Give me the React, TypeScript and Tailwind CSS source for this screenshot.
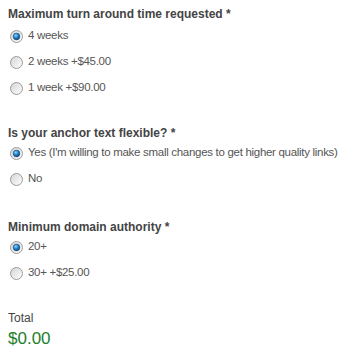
import React from "react";

function Radio({ checked }: { checked?: boolean }) {
  return (
    <svg width="13" height="13" viewBox="0 0 13 13" className="shrink-0">
      <defs>
        <linearGradient id="rbg" x1="0" y1="0" x2="1" y2="1">
          <stop offset="0" stopColor="#d4d4d4" />
          <stop offset="1" stopColor="#ffffff" />
        </linearGradient>
        <radialGradient id="rdot" cx="0.4" cy="0.35" r="0.7">
          <stop offset="0" stopColor="#9ad8ff" />
          <stop offset="0.5" stopColor="#1a7fc9" />
          <stop offset="1" stopColor="#0b3f73" />
        </radialGradient>
      </defs>
      <circle cx="6.5" cy="6.5" r="6" fill="url(#rbg)" stroke="#9a9b9b" strokeWidth="1" />
      {checked && <circle cx="6.5" cy="6.5" r="3.4" fill="url(#rdot)" stroke="#2a4f72" strokeWidth="0.5" />}
    </svg>
  );
}

function Option({ label, checked }: { label: string; checked?: boolean }) {
  return (
    <div className="flex items-center gap-[5px] pl-[10px] h-[26px]">
      <Radio checked={checked} />
      <span className="text-[11.5px] tracking-[-0.3px] text-[#555] whitespace-nowrap">{label}</span>
    </div>
  );
}

function Group({ title, children, first }: { title: string; children: React.ReactNode; first?: boolean }) {
  return (
    <div className="flex flex-col">
      <div
        className={
          first
            ? "text-[12px] font-bold text-[#444] pl-[8px] leading-[16px] mb-[1px]"
            : "text-[12px] font-bold text-[#444] pl-[8px] leading-[16px] mb-[-1px]"
        }
      >
        {title}
      </div>
      {children}
    </div>
  );
}

export default function App() {
  return (
    <div
      className="w-[355px] h-[358px] bg-white pt-[6px] flex flex-col"
      style={{ fontFamily: '"Liberation Sans", Arial, sans-serif' }}
    >
      <Group title="Maximum turn around time requested *" first>
        <Option label="4 weeks" checked />
        <Option label="2 weeks +$45.00" />
        <Option label="1 week +$90.00" />
      </Group>
      <div className="h-[24px]" />
      <Group title="Is your anchor text flexible? *">
        <Option label="Yes (I'm willing to make small changes to get higher quality links)" checked />
        <Option label="No" />
      </Group>
      <div className="h-[27px]" />
      <Group title="Minimum domain authority *">
        <Option label="20+" checked />
        <Option label="30+ +$25.00" />
      </Group>
      <div className="h-[25px]" />
      <div className="pl-[8px] text-[12px] leading-[14px] text-[#444]">Total</div>
      <div className="pl-[8px] text-[17px] leading-[20px] mt-[4px] text-[#22802a]">$0.00</div>
    </div>
  );
}
